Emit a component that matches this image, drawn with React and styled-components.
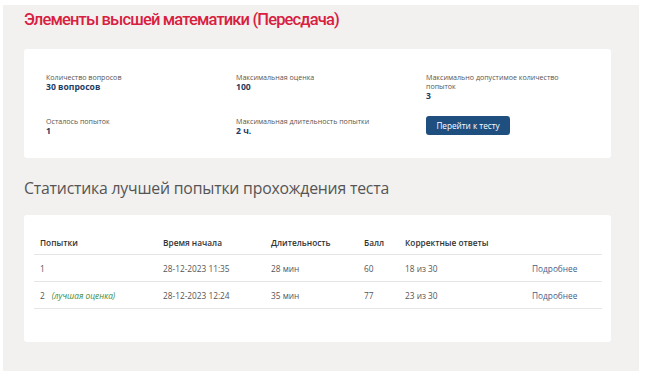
import React from 'react'
import styled, { createGlobalStyle } from 'styled-components';

const Global = createGlobalStyle`
body {
  margin: 0;
  background: #ffffff;
  font-family: "Open Sans", "Noto Sans", sans-serif;
}
`

const Page = styled.div`
margin: 5px 0 0 3px;
width: 636px;
height: 366px;
box-sizing: border-box;
background: #f2f1ef;
padding: 0 28px 0 21px;
`

const Title = styled.h1`
margin: 0;
padding-top: 3px;
height: 44px;
box-sizing: border-box;
font-family: Roboto, sans-serif;
font-weight: 500;
font-size: 16.5px;
line-height: 24px;
letter-spacing: -0.85px;
color: #d8203f;
`

const Card = styled.div`
background: #ffffff;
border-radius: 3px;
box-sizing: border-box;
height: ${p => p.h}px;
padding: ${p => p.pad};
`

const InfoGrid = styled.div`
display: grid;
grid-template-columns: 190px 190px 190px;
grid-template-rows: 44px 30px;
`

const Info = styled.div`
display: flex;
flex-direction: column;
`

const Label = styled.span`
font-size: 7.1px;
line-height: 9px;
color: #555555;
`

const Value = styled.span`
font-size: 8.6px;
line-height: 10px;
font-weight: 700;
color: #1f3c63;
`

const Button = styled.button`
width: 84px;
height: 19px;
margin-top: -1px;
border: none;
border-radius: 3px;
background: #1f4f7f;
color: #ffffff;
font-family: "Open Sans", sans-serif;
font-size: 8.2px;
padding: 0;
cursor: pointer;
`

const SubTitle = styled.h2`
margin: 0;
height: 57px;
padding-top: 19px;
box-sizing: border-box;
font-family: "Open Sans", sans-serif;
font-weight: 400;
font-size: 15.8px;
letter-spacing: -0.2px;
color: #555555;
`

const Table = styled.table`
border-collapse: collapse;
width: 568px;
table-layout: fixed;
font-size: 8.3px;
color: #555555;
`

const Th = styled.th`
text-align: left;
font-weight: 600;
color: #333333;
height: 24px;
padding: 0 6px;
border-bottom: 1px solid #e6e6e6;
`

const Td = styled.td`
height: 26px;
padding: 0 6px;
border-bottom: 1px solid #e6e6e6;
`

const Best = styled.i`
margin-left: 7px;
color: #3d8b3d;
`

const More = styled.a`
color: #3e5f8c;
text-decoration: none;
`

const info = [
  { label: 'Количество вопросов', value: '30 вопросов' },
  { label: 'Максимальная оценка', value: '100' },
  { label: 'Максимально допустимое количество попыток', value: '3', wrap: true },
  { label: 'Осталось попыток', value: '1' },
  { label: 'Максимальная длительность попытки', value: '2 ч.' },
]

const attempts = [
  { n: 1, start: '28-12-2023 11:35', dur: '28 мин', score: 60, ok: '18 из 30' },
  { n: 2, start: '28-12-2023 12:24', dur: '35 мин', score: 77, ok: '23 из 30', best: true },
]

const widths = [123, 108, 93, 41, 127, 76]

function App() {
  return (
    <>
      <Global />
      <Page>
        <Title>Элементы высшей математики (Пересдача)</Title>
        <Card h={109} pad="24px 22px">
          <InfoGrid>
            {info.map(i => (
              <Info key={i.label}>
                <Label style={i.wrap ? { width: 145 } : undefined}>{i.label}</Label>
                <Value>{i.value}</Value>
              </Info>
            ))}
            <Info>
              <Button>Перейти к тесту</Button>
            </Info>
          </InfoGrid>
        </Card>
        <SubTitle>Статистика лучшей попытки прохождения теста</SubTitle>
        <Card h={127} pad="15px 9px 0 10px">
          <Table>
            <colgroup>
              {widths.map((w, i) => <col key={i} style={{ width: w }} />)}
            </colgroup>
            <thead>
              <tr>
                <Th>Попытки</Th>
                <Th>Время начала</Th>
                <Th>Длительность</Th>
                <Th>Балл</Th>
                <Th>Корректные ответы</Th>
                <Th></Th>
              </tr>
            </thead>
            <tbody>
              {attempts.map(a => (
                <tr key={a.n}>
                  <Td>{a.n}{a.best && <Best>(лучшая оценка)</Best>}</Td>
                  <Td>{a.start}</Td>
                  <Td>{a.dur}</Td>
                  <Td>{a.score}</Td>
                  <Td>{a.ok}</Td>
                  <Td><More href="#">Подробнее</More></Td>
                </tr>
              ))}
            </tbody>
          </Table>
        </Card>
      </Page>
    </>
  )
}

export default App;
